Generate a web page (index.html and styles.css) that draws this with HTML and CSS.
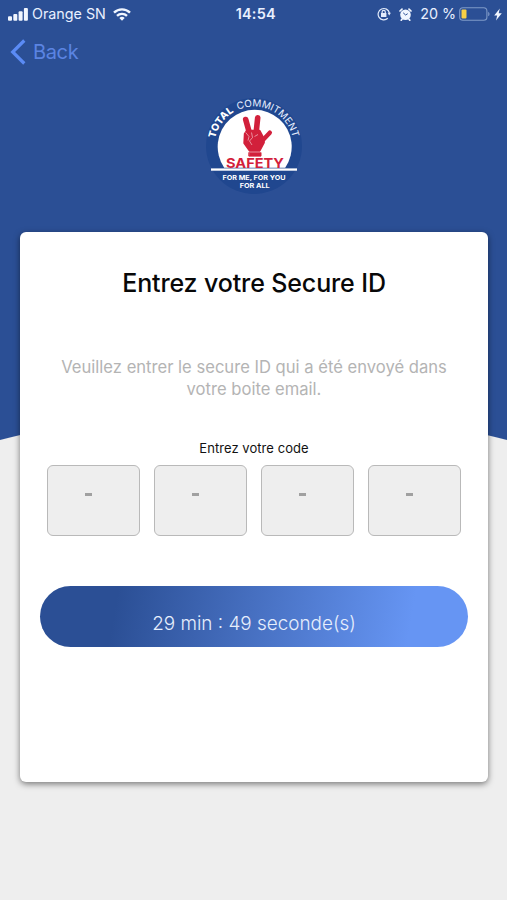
FILE: index.html
```html
<!DOCTYPE html>
<html lang="fr">
<head>
<meta charset="utf-8">
<title>Secure ID</title>
<link rel="stylesheet" href="styles.css">
</head>
<body>
<div class="screen">
  <header class="status">
    <div class="status-left">
      <svg class="signal" width="20" height="13" viewBox="0 0 20 13" fill="#f1f6ff"><rect x="0" y="8.2" width="4" height="4.6" rx="1"/><rect x="5.3" y="6" width="4" height="6.8" rx="1"/><rect x="10.6" y="3.3" width="4" height="9.5" rx="1"/><rect x="15.9" y="0" width="4" height="12.8" rx="1"/></svg>
      <span class="carrier">Orange SN</span>
      <svg class="wifi" width="18" height="13" viewBox="0 0 18 13" fill="none" stroke="#f1f6ff" stroke-width="2.4"><path d="M1 4.7a11.4 11.4 0 0 1 16 0"/><path d="M4 7.9a7.2 7.2 0 0 1 10 0"/><path d="M9 12.7 6.3 10a3.9 3.9 0 0 1 5.4 0Z" fill="#f1f6ff" stroke="none"/></svg>
    </div>
    <span class="clock">14:54</span>
    <div class="status-right">
      <svg width="14" height="14" viewBox="0 0 14 14" fill="none" stroke="#e4ecfb" stroke-width="1.2"><path d="M10.8 11.3A5.7 5.7 0 1 1 12.4 6"/><path d="m10.6 5.7 1.6 2.7 1.7-2.7Z" fill="#e4ecfb" stroke="none"/><rect x="4" y="6" width="5.4" height="4" fill="#e4ecfb" stroke="none"/><path d="M5.1 6.4V5a1.6 1.6 0 0 1 3.2 0v1.4"/></svg>
      <svg class="alarm" width="13" height="13" viewBox="0 0 13 13"><circle cx="6.5" cy="6.8" r="5.3" fill="#f1f6ff"/><path d="M1 3 3 1.1M12 3 10 1.1M3 11.2l-.8 1M10 11.2l.8 1" stroke="#f1f6ff" stroke-width="1.7" stroke-linecap="round"/><path d="m4.2 4.8 2.4 2.2 2.1-1.3" fill="none" stroke="#2b4f95" stroke-width="1"/></svg>
      <span class="percent">20 %</span>
      <svg class="battery" width="31" height="14" viewBox="0 0 31 14"><rect x=".7" y=".7" width="27.2" height="12.6" rx="3.3" fill="none" stroke="#7f9ac8" stroke-width="1.1"/><rect x="2.5" y="2.5" width="5" height="9" rx="1" fill="#f8cf45"/><path d="M29.2 4.7c1.8.8 1.8 3.8 0 4.6Z" fill="#7f9ac8"/></svg>
      <svg class="bolt" width="8" height="13" viewBox="0 0 8 13"><path d="M5.8.5.2 7.4h3L2 12.5 7.8 5.3H4.7Z" fill="#f1f6ff"/></svg>
    </div>
  </header>
  <nav class="back">
    <svg width="16" height="26" viewBox="0 0 16 26" fill="none" stroke="#5b8bf5" stroke-width="3.2"><path d="M14.3 1.5 2.7 13l11.6 11.5"/></svg>
    <span class="back-label">Back</span>
  </nav>
  <svg class="logo" width="100" height="100" viewBox="205 95 100 100">
    <defs>
      <path id="arc" d="M214.5 146a39.5 39.5 0 0 1 79 0"/>
    </defs>
    <circle cx="254" cy="146" r="48" fill="#20478f"/>
    <path d="M224.2 167.7A37 37 0 1 1 285.2 167.7Z" fill="#fff"/>
    <rect x="211" y="168.4" width="86" height="2.3" fill="#fff"/>
    <text class="arc-bold"><textPath href="#arc" startOffset="7.5" textLength="33.5" lengthAdjust="spacingAndGlyphs">TOTAL</textPath></text>
    <text class="arc-light"><textPath href="#arc" startOffset="45.5" textLength="70" lengthAdjust="spacingAndGlyphs">COMMITMENT</textPath></text>
    <g fill="#d2203b" stroke="#d2203b" stroke-linejoin="round" stroke-linecap="round">
      <path d="m250 135-4.3-15.5" stroke-width="5.6"/>
      <path d="m256 134 1.7-16.3" stroke-width="5.6"/>
      <path d="m262 141 7.8-8.3" stroke-width="4.4"/>
      <path d="m247 131 12.5 0 3.2 6 1 5.5-4.5 8.5h-9l-5.7-8 .5-9Z" stroke-width="2.4"/>
      <path d="M249.2 152.5h11.8v3.6h-11.8Z" stroke-width="1"/>
    </g>
    <path d="m245.7 132.5 3.3 4-1 4M251.5 132.5l1 5-3 3.5 2.5 4M258 134.5l-3.5 2M249 152h12" fill="none" stroke="#fff" stroke-width=".5"/>
    <text class="safety" x="255" y="167.6" textLength="58" lengthAdjust="spacingAndGlyphs">SAFETY</text>
    <text class="motto" x="254" y="179.8" textLength="63" lengthAdjust="spacingAndGlyphs">FOR ME, FOR YOU</text>
    <text class="motto" x="254.7" y="187.5" textLength="30" lengthAdjust="spacingAndGlyphs">FOR ALL</text>
  </svg>
  <main class="card">
    <h1>Entrez votre Secure ID</h1>
    <p class="intro">Veuillez entrer le secure ID qui a été envoyé dans<br>votre boite email.</p>
    <p class="label">Entrez votre code</p>
    <div class="code">
      <div class="digit"><i></i></div>
      <div class="digit"><i></i></div>
      <div class="digit"><i></i></div>
      <div class="digit"><i></i></div>
    </div>
    <div class="timer">29 min : 49 seconde(s)</div>
  </main>
</div>
</body>
</html>
```
FILE: styles.css
```css
* { box-sizing: border-box; }
body { margin: 0; font-family: Inter, "Liberation Sans", sans-serif; }
.screen {
  height: 900px;
  overflow: hidden;
  display: flex;
  flex-direction: column;
  background: radial-gradient(circle 1020px at 253.5px 1428px, #eee 0 1019.5px, #2b4f95 1020.5px);
}
.status {
  height: 28px;
  flex: none;
  padding: 0 5px 0 8px;
  display: grid;
  grid-template-columns: 1fr auto 1fr;
  align-items: center;
  color: #e9f0ff;
  font-size: 14.6px;
  line-height: 28px;
}
.status-left, .status-right { display: flex; align-items: center; }
.status-right { justify-content: flex-end; }
.carrier { margin-left: 4px; font-size: 14.3px; }
.wifi { margin-left: 7px; }
.clock { margin-left: 1.5px; font-weight: 600; font-size: 14.5px; letter-spacing: .2px; }
.alarm { margin-left: 8px; }
.percent { margin-left: 8px; font-size: 14.3px; }
.battery { margin-left: 3px; }
.bolt { margin-left: 4px; }
.back {
  height: 48px;
  flex: none;
  padding-left: 10px;
  display: flex;
  align-items: center;
  color: #5b84e2;
  font-size: 20px;
  letter-spacing: -.35px;
}
.back-label { margin-left: 7px; }
.logo { margin: 19px 0 0 205px; flex: none; }
.arc-bold { font: 800 10px Inter, sans-serif; fill: #fff; }
.arc-light { font: 400 9.8px Inter, sans-serif; fill: #e9f0ff; }
.safety { font: 700 13.2px Inter, sans-serif; fill: #d2203b; text-anchor: middle; }
.motto { font: 700 6.8px Inter, sans-serif; fill: #fff; text-anchor: middle; }
.card {
  width: 467.5px;
  height: 549.5px;
  margin: 37px 0 0 20.25px;
  padding: 0 19.75px;
  border-radius: 6px;
  background: #fff;
  box-shadow: 0 2px 6px rgba(0, 0, 0, .5);
  text-align: center;
}
h1 { margin: 0; padding-top: 34px; font-size: 25px; line-height: 34px; font-weight: 500; letter-spacing: -.13px; color: #080808; }
.intro { margin: 56px 0 0; font-size: 16.6px; line-height: 22px; color: #b4b4b4; }
.label { margin: 39px 0 0; font-size: 13px; line-height: 18px; letter-spacing: .05px; color: #111; }
.code { display: grid; grid-template-columns: repeat(4, 93px); gap: 14px; margin: 8px 0 0 7px; }
.digit {
  height: 71px;
  padding: 27px 0 0 37px;
  border: 1.5px solid #b9b9b9;
  border-radius: 6px;
  background: #eee;
}
.digit i { display: block; width: 7px; height: 3px; background: #a0a0a0; }
.timer {
  width: 428px;
  height: 61px;
  margin-top: 50px;
  padding-top: 8px;
  border-radius: 31px;
  background: linear-gradient(100deg, #2b4f95 18%, #6695f3 86%);
  color: #e6eefc;
  font-size: 18.9px;
  font-weight: 300;
  line-height: 60px;
}
```
